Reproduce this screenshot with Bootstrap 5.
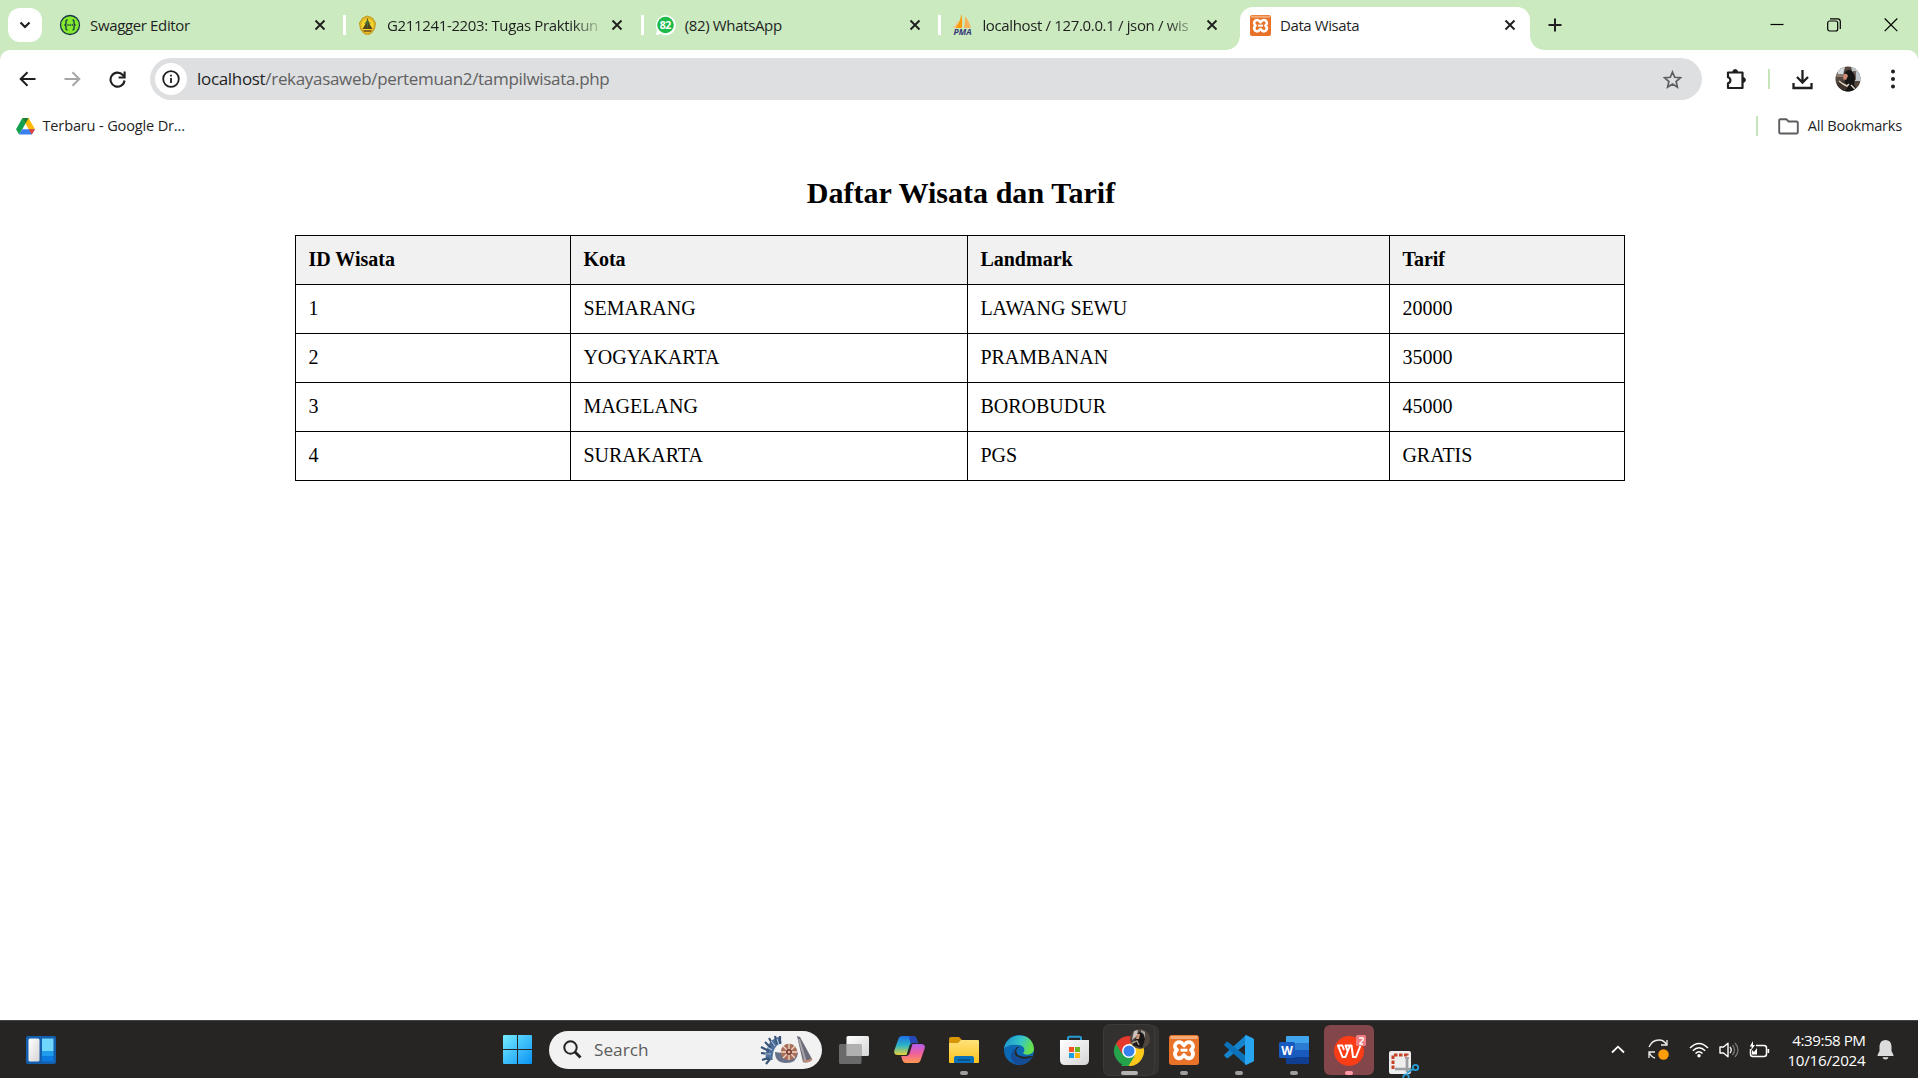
<!DOCTYPE html>
<html lang="id">
<head>
<meta charset="utf-8">
<title>Data Wisata</title>
<link rel="stylesheet" href="https://cdn.jsdelivr.net/npm/bootstrap@5.3.0/dist/css/bootstrap.min.css">
<style>
body{width:1918px;height:1078px;overflow:hidden;background:#fff;font-family:"Open Sans","Noto Sans",sans-serif;color:#1f1f1f}
svg{display:block;flex:none}
header{background:linear-gradient(#cbeabf 70px,#fff 70px)}
.strip{height:50px;background:#cbeabf}
.chev{width:34px;height:34px;margin-left:8px;background:#fff;border-radius:12px}
.tab-item{width:294.7px;height:36px;padding-left:11px;font-size:15px;letter-spacing:-.35px}
.first-tab{width:301px;padding-left:17px}
.last-tab{width:298.6px}
.fav{margin-right:9px}
.tab-item .label,.fit{white-space:nowrap;display:block}
.tab-item .label{width:210px}
.tab-item svg.x{margin-left:14px}
.fade-end{-webkit-mask-image:linear-gradient(90deg,#000 88%,rgba(0,0,0,.25) 100%)}
.split{width:3px;height:20px;background:#fff}
.active-tab{width:290px;height:43px;background:#fff;border-radius:13px 13px 0 0;position:relative;font-size:15px;letter-spacing:-.4px;padding:0 14px 7px 10px}
.active-tab:before,.active-tab:after{content:"";position:absolute;bottom:0;width:14px;height:14px}
.active-tab:before{left:-14px;background:radial-gradient(circle at 0 0,transparent 13.5px,#fff 14px)}
.active-tab:after{right:-14px;background:radial-gradient(circle at 100% 0,transparent 13.5px,#fff 14px)}
.plus{margin-left:18px}
.controls{gap:43px;padding-right:20px}
.tools{height:58px;background:#fff;border-radius:10px 10px 0 0}
.navs{gap:28px;padding-left:19px}
.omni{width:1552px;height:42px;border-radius:21px;background:#dedfe1;margin-left:24px}
.addr{font-size:17px;letter-spacing:-.32px;margin-left:10px}
.addr .path{color:#616161}
.info{width:32px;height:32px;border-radius:50%;background:#fff;margin-left:5px}
.gbar{width:2px;height:20px;background:#c6e5ba}
.marks{height:36px;font-size:14.6px}
.book{letter-spacing:-.18px;margin-left:8px}
.allb{letter-spacing:-.24px;margin-left:9px;margin-right:16px}
.sheet{height:876px;font-family:"Liberation Serif",serif;color:#000}
.sheet h2{font-size:30px;font-weight:700;line-height:34px;letter-spacing:.04px;padding:32px 0 25px 4px}
.wisata{width:1330px;margin-left:295px;border-collapse:collapse;table-layout:fixed;font-size:20px;line-height:23px}
.wisata th,.wisata td{border:1px solid #000;height:49px;padding:0 12.4px 1.6px}
.wisata th{background:#f1f1f1}
.dock{height:58px;background:#272523;border-top:1px solid #454342;color:#fff}
.find{width:273px;height:38px;border-radius:19px;background:#f2f2f2;color:#5c5c5c;font-size:17.2px;margin-left:17px}
.apps{margin-left:4.500px}
.cell{width:55px;height:57px;position:relative}
.cell.dot:after{content:"";position:absolute;left:23.5px;bottom:3px;width:8px;height:4px;border-radius:2px;background:#9f9e9d}
.cell.run:after{left:19px;width:17px;background:#b5b4b3}
.cell.pink:after{background:#ff9aa8}
.tile{width:50px;height:50px;border-radius:6px}
.chrome-tile{background:#333130;box-shadow:0 0 0 1px #3d3b3a,5px 0 0 0 #353332}
.wps-tile{background:#83464b}
.clock{font-size:15.2px;line-height:20px;width:78px;margin-left:18px}
.time{letter-spacing:-.5px}
.date{letter-spacing:-.25px}
</style>
<script src="https://cdn.jsdelivr.net/npm/bootstrap@5.3.0/dist/js/bootstrap.bundle.min.js"></script>
</head>
<body>
<svg width="0" height="0" class="position-absolute">
<defs>
<symbol id="close" viewBox="0 0 12 12"><path d="M1.500 1.500l9 9M10.500 1.500l-9 9" stroke="#1f1f1f" stroke-width="1.900"/></symbol>
<symbol id="xampp" viewBox="0 0 30 30"><rect width="30" height="30" rx="3" fill="#e87328"/><rect x="1" y="1" width="28" height="3" rx="1.500" fill="#f3ab78"/><path d="M15 10.500Q11.500 5.500 7.500 8 4 11.500 8 15 4 18.500 7.500 22.500 11.500 25 15 20 18.500 25 22.500 22.500 26 18.500 22 15 26 11.500 22.500 8 18.500 5.500 15 10.500z" fill="none" stroke="#fff" stroke-width="3.700" stroke-linejoin="round"/><path d="M11.500 15.200h7" stroke="#fff" stroke-width="3"/></symbol>
<linearGradient id="gw" x1="0" y1="0" x2="1" y2="1"><stop stop-color="#74ecff"/><stop offset="1" stop-color="#0a93f5"/></linearGradient>
<linearGradient id="gf" x1="0" y1="0" x2="0" y2="1"><stop stop-color="#ffe27a"/><stop offset="1" stop-color="#fcc21d"/></linearGradient>
<linearGradient id="ge" x1="0" y1="0" x2="1" y2=".3"><stop stop-color="#168bd1"/><stop offset=".6" stop-color="#37c6c6"/><stop offset="1" stop-color="#66e04f"/></linearGradient>
<linearGradient id="gc1" x1="0" y1="0" x2="0" y2="1"><stop stop-color="#1d6fe8"/><stop offset=".5" stop-color="#2eb5c4"/><stop offset="1" stop-color="#e8d438"/></linearGradient>
<linearGradient id="gc2" x1="0" y1="0" x2="0" y2="1"><stop stop-color="#b45cf0"/><stop offset=".5" stop-color="#f0609a"/><stop offset="1" stop-color="#ff9a50"/></linearGradient>
<linearGradient id="gt" x1="0" y1="0" x2="1" y2="1"><stop stop-color="#fff"/><stop offset="1" stop-color="#d5d5d5"/></linearGradient>
</defs>
</svg>

<header>
<div class="strip d-flex align-items-center">
  <div class="chev d-flex align-items-center justify-content-center"><svg width="12" height="8" viewBox="0 0 12 8"><path d="M1.500 1.500L6 6l4.500-4.500" fill="none" stroke="#1f1f1f" stroke-width="2.200"/></svg></div>
  <div class="tab-item first-tab d-flex align-items-center">
    <svg class="fav" width="22" height="22" viewBox="0 0 22 22"><circle cx="11" cy="11" r="9.500" fill="#85ea2d" stroke="#173647" stroke-width="1.300"/><path d="M8.500 6C6.500 6 7 7.500 7 9s-.4 2-1.600 2C6.600 11 7 11.600 7 13s-.5 3 1.500 3M13.500 6c2 0 1.500 1.500 1.500 3s.4 2 1.600 2c-1.200 0-1.600.6-1.600 2s.5 3-1.500 3" fill="none" stroke="#173647" stroke-width="1.300"/><path d="M8.300 11h5.800" stroke="#173647" stroke-width="1.500" stroke-dasharray="1.400 .8"/></svg>
    <span class="label">Swagger Editor</span><svg class="x" width="12" height="12"><use href="#close"/></svg>
  </div>
  <div class="split"></div>
  <div class="tab-item d-flex align-items-center">
    <svg class="fav" width="21" height="20" viewBox="-.5 1 21 20"><path d="M10 2l5 2 3 5-1 6-3 4-4 2-4-2-3-4-1-6 3-5z" fill="#dfb72b" stroke="#c29a1c"/><circle cx="10" cy="11" r="6" fill="#f5d72d"/><path d="M10 4l2 6 3 5H5l3-5z" fill="#54451c"/><path d="M7 9h6M10 6v8" stroke="#3e7040" stroke-width="1"/><path d="M6 17h8" stroke="#8f6b20" stroke-width="2"/></svg>
    <span class="label fade-end">G211241-2203: Tugas Praktikun</span><svg class="x" width="12" height="12"><use href="#close"/></svg>
  </div>
  <div class="split"></div>
  <div class="tab-item d-flex align-items-center">
    <svg class="fav" width="21" height="22" viewBox="0 0 21 22"><path d="M1 21l1-5A10 10 0 1 1 6 20z" fill="#fff"/><circle cx="10.500" cy="11" r="8.300" fill="#1dbb49"/><text x="10.300" y="14.800" text-anchor="middle" font-size="10.500" font-weight="700" fill="#fff">82</text></svg>
    <span class="label">(82) WhatsApp</span><svg class="x" width="12" height="12"><use href="#close"/></svg>
  </div>
  <div class="split"></div>
  <div class="tab-item last-tab d-flex align-items-center">
    <svg class="fav" width="21" height="22" viewBox="0 0 21 22"><path d="M9 0c2 5 1 9 1 14H3C6 10 9 6 9 0z" fill="#f89c0e"/><path d="M13 2c3 4 5 8 6 12h-7c1-4 1-8 1-12z" fill="#f5b25a"/><path d="M5 6c1 3 0 6-1 8H1c2-2 4-5 4-8z" fill="#fac484"/><text x="10.500" y="21" text-anchor="middle" font-size="8.500" letter-spacing="0" font-style="italic" font-weight="700" fill="#353b78">PMA</text></svg>
    <span class="label fade-end">localhost / 127.0.0.1 / json / wis</span><svg class="x" width="12" height="12"><use href="#close"/></svg>
  </div>
  <div class="active-tab d-flex align-items-center align-self-end">
    <svg class="fav" width="21" height="21"><use href="#xampp"/></svg><span class="fit">Data Wisata</span>
    <svg class="ms-auto" width="12" height="12"><use href="#close"/></svg>
  </div>
  <svg class="plus" width="14" height="14" viewBox="0 0 14 14"><path d="M7 .5v13M.5 7h13" stroke="#1f1f1f" stroke-width="2"/></svg>
  <div class="controls d-flex align-items-center ms-auto">
    <svg width="14" height="14" viewBox="0 0 14 14"><path d="M.5 6.500h13" stroke="#000" stroke-width="1.200"/></svg>
    <svg width="14" height="14" viewBox="0 0 14 14"><rect x=".7" y="3" width="10" height="10" rx="2" fill="none" stroke="#000" stroke-width="1.200"/><path d="M3 .8h7.500q2.800 0 2.800 2.800V11" fill="none" stroke="#000" stroke-width="1.200"/></svg>
    <svg width="14" height="14" viewBox="0 0 14 14"><path d="M.7.500l12.600 12.600M13.300.5L.7 13.100" stroke="#000" stroke-width="1.200"/></svg>
  </div>
</div>

<div class="tools d-flex align-items-center">
  <div class="navs d-flex align-items-center">
  <svg width="17" height="16" viewBox="0 0 17 16"><path d="M16.500 8H2M8.500 1.200L1.700 8l6.800 6.800" fill="none" stroke="#1f1f1f" stroke-width="2"/></svg>
  <svg width="17" height="16" viewBox="0 0 17 16"><path d="M.5 8H15M8.500 1.200L15.300 8l-6.800 6.800" fill="none" stroke="#a6a6a6" stroke-width="2"/></svg>
  <svg width="17" height="17" viewBox="0 0 17 17"><path d="M15.500 9.500A7 7 0 1 1 13.800 4L15 5.300" fill="none" stroke="#1f1f1f" stroke-width="2.100"/><path d="M15.600.5v6h-6" fill="none" stroke="#1f1f1f" stroke-width="2.100"/></svg>
  </div>
  <div class="omni d-flex align-items-center">
    <div class="info d-flex align-items-center justify-content-center"><svg width="18" height="18" viewBox="0 0 18 18"><circle cx="9" cy="9" r="7.800" fill="none" stroke="#1f1f1f" stroke-width="1.800"/><path d="M9 8v5M9 4.800v1.800" stroke="#1f1f1f" stroke-width="1.800"/></svg></div>
    <span class="fit addr">localhost<span class="path">/rekayasaweb/pertemuan2/tampilwisata.php</span></span>
    <svg class="ms-auto" style="margin-right:20px" width="19" height="19" viewBox="0 0 19 19"><path d="M9.500 2l2.200 5.300 5.700.5-4.300 3.700 1.300 5.600-4.900-3-4.900 3 1.300-5.600L1.600 7.800l5.700-.5z" fill="none" stroke="#5f6062" stroke-width="1.700"/></svg>
  </div>
  <svg style="margin-left:23px" width="22" height="22" viewBox="0 0 22 22"><path d="M3 4.500h14.500V20H3v-4.600a3.200 3.200 0 0 0 0-6.200z" fill="none" stroke="#1f1f1f" stroke-width="2.200" stroke-linejoin="round"/><path d="M7.800 4a2.400 2.400 0 0 1 4.800 0zM18 9.600a2.400 2.400 0 0 1 0 4.800z" fill="#1f1f1f" stroke="#1f1f1f"/></svg>
  <div class="gbar" style="margin-left:21px"></div>
  <svg style="margin-left:22px" width="21" height="21" viewBox="0 0 21 21"><path d="M10.500 1v12M5 8l5.500 5.500L16 8M1.500 14v5h18v-5" fill="none" stroke="#1f1f1f" stroke-width="2.300"/></svg>
  <svg style="margin-left:22px" width="26" height="26" viewBox="0 0 26 26"><defs><clipPath id="av"><circle cx="13" cy="13" r="12.500"/></clipPath></defs><g clip-path="url(#av)"><rect width="26" height="26" fill="#56483f"/><path d="M0 0h9v11H0z" fill="#8b7b70"/><path d="M3 1h7l-2 7H3z" fill="#d3dde0"/><path d="M16 0h10v15h-7z" fill="#bfc9cd"/><path d="M18 5h3v9h-3z" fill="#71625b"/><path d="M9 8q3-6 8-3 5 5 2 13l4 8H5l5-11z" fill="#161516"/><path d="M9 8q3-1 4 2l-2 4-3-1z" fill="#d18a73"/><path d="M2 17l6-3 5 7-4 5H4z" fill="#3e342d"/><path d="M8 18l4 2 2-2M4 15l4 3M16 19l4 4" fill="none" stroke="#ded1be" stroke-width="1.500"/></g></svg>
  <svg style="margin-left:29px" width="6" height="20" viewBox="0 0 6 20"><g fill="#1f1f1f"><circle cx="3" cy="2.500" r="2"/><circle cx="3" cy="10" r="2"/><circle cx="3" cy="17.500" r="2"/></g></svg>
</div>

<div class="marks d-flex align-items-center">
  <svg style="margin-left:15.500px" width="19" height="17" viewBox="0 0 20 18"><path d="M6.700 0h6.600L6.600 11.800 3.300 17.500 0 11.800z" fill="#11a050"/><path d="M6.700 0h6.600L20 11.800h-6.600z" fill="#fdba00"/><path d="M6.600 11.800H20l-3.300 5.700H3.300z" fill="#3b80f3"/><path d="M13.400 11.800H20l-3.300 5.700z" fill="#e64234"/><path d="M6.700 0h6.600L10 5.900z" fill="#188038"/></svg>
  <span class="fit book">Terbaru - Google Dr...</span>
  <div class="gbar ms-auto"></div>
  <svg style="margin-left:20px" width="21" height="17" viewBox="0 0 21 17"><path d="M2.500 1.200h5.800l2.200 2.300h8q1.300 0 1.300 1.300v9.400q0 1.300-1.300 1.300h-16q-1.300 0-1.300-1.300V2.500q0-1.300 1.300-1.300z" fill="none" stroke="#5b5d60" stroke-width="1.900"/></svg>
  <span class="fit allb">All Bookmarks</span>
</div>
</header>

<main class="sheet">
  <h2 class="text-center m-0">Daftar Wisata dan Tarif</h2>
  <table class="wisata">
    <colgroup><col style="width:275px"><col style="width:397px"><col style="width:422px"><col style="width:235px"></colgroup>
    <tr><th>ID Wisata</th><th>Kota</th><th>Landmark</th><th>Tarif</th></tr>
    <tr><td>1</td><td>SEMARANG</td><td>LAWANG SEWU</td><td>20000</td></tr>
    <tr><td>2</td><td>YOGYAKARTA</td><td>PRAMBANAN</td><td>35000</td></tr>
    <tr><td>3</td><td>MAGELANG</td><td>BOROBUDUR</td><td>45000</td></tr>
    <tr><td>4</td><td>SURAKARTA</td><td>PGS</td><td>GRATIS</td></tr>
  </table>
</main>

<footer class="dock d-flex align-items-center">
  <svg style="margin-left:26px" width="30" height="28" viewBox="0 0 30 28"><rect width="30" height="28" rx="2" fill="#135fae"/><rect x="2.500" y="2.500" width="11" height="23" rx="1.500" fill="url(#gt)"/><path d="M16 2.500h11.500V15H16z" fill="#70d5fb"/><path d="M16 15h11.500v5H16z" fill="#209cee"/><path d="M16 20h11.500v5.500H16z" fill="#0b7be0"/></svg>
  <svg style="margin-left:447px" width="29" height="29" viewBox="0 0 29 29"><path fill="url(#gw)" d="M1 0h13v14H0V1q0-1 1-1zM15 0h13q1 0 1 1v13H15zM0 15h14v14H1q-1 0-1-1zM15 15h14v13q0 1-1 1H15z"/></svg>
  <div class="find d-flex align-items-center">
    <svg style="margin-left:14px" width="19" height="19" viewBox="0 0 19 19"><circle cx="7.500" cy="7.500" r="6.200" fill="none" stroke="#222" stroke-width="2"/><path d="M12 12l5.500 5.500" stroke="#222" stroke-width="2.800"/></svg>
    <span class="fit" style="margin-left:12px;padding-top:1px">Search</span>
    <svg class="ms-auto" style="margin-right:8px" width="54" height="30" viewBox="0 0 54 30"><path d="M21 5Q9 7 9 25" fill="none" stroke="#50719c" stroke-width="7"/><path d="M20 1v8M15 1l2 8M9 3l4 7M5 7l6 6M1 12l8 4M1 18l8 1M2 25l7-2M6 29l4-5" stroke="#395678" stroke-width="2.200"/><path d="M17 4l2 6M11 6l4 5M7 12l5 3M5 19l6 0" stroke="#a9c2dd" stroke-width="1.100"/><path d="M15 17q0 11 11 11t12-10l-9-6-7 6z" fill="#687187"/><circle cx="29" cy="17" r="8.300" fill="#a96f5a"/><path d="M29 9v16M21 17h16M23 11l12 12M35 11L23 23" stroke="#f0d7c5" stroke-width="1.300"/><circle cx="29" cy="17" r="3" fill="#793f37"/><circle cx="29" cy="17" r="1.300" fill="#e2ba9f"/><path d="M37 1l3 1 12 22q-3 5-9 3z" fill="#6b6b79"/><path d="M39 4l6.500 22" stroke="#aaa4a9" stroke-width="2"/><path d="M43 25q5 3 9-1" fill="none" stroke="#c88f77" stroke-width="2"/></svg>
  </div>
  <div class="apps d-flex align-items-center">
    <div class="cell d-flex align-items-center justify-content-center"><svg width="30" height="28" viewBox="0 0 30 28"><rect x="7.500" width="22.500" height="20" rx="1.500" fill="url(#gt)"/><rect y="8" width="22.500" height="20" rx="1.500" fill="#777" fill-opacity=".85"/><path d="M7.500 8h15v12h-15z" fill="#b0b0b0"/></svg></div>
    <div class="cell d-flex align-items-center justify-content-center"><svg width="31" height="29" viewBox="0 0 31 29"><path d="M8 1h11q3 0 4 4l.8 3H19q-3 0-4 4l-2.500 8H4q-5 0-3.500-5L4 5q1-4 4-4z" fill="url(#gc1)"/><path d="M23 28H12q-3 0-4-4l-.8-3H12q3 0 4-4l2.500-8H27q5 0 3.500 5L27 24q-1 4-4 4z" fill="url(#gc2)"/><path d="M15 1h4q3 0 4 4l.8 3H19q-1.500 0-2.500 1z" fill="#2547b8"/></svg></div>
    <div class="cell dot d-flex align-items-center justify-content-center"><svg width="30" height="28" viewBox="0 0 30 28"><path d="M0 3q0-2 2-2h8l3 3-3 3H0z" fill="#d69607"/><path d="M0 7h9l3-3h17q1 0 1 1v21q0 1-1 1H1q-1 0-1-1z" fill="url(#gf)"/><path d="M5 27v-5q0-2 2-2h16q2 0 2 2v5z" fill="#0c70b8"/><path d="M9 24h12" stroke="#064779" stroke-width="1.300"/></svg></div>
    <div class="cell d-flex align-items-center justify-content-center"><svg width="30" height="30" viewBox="0 0 30 30"><circle cx="15" cy="15" r="15" fill="#0d68b4"/><path d="M0 14C2-3 29-5 30 14c0 6-9 7-11 4 3-3 1-8-5-8C7 9 2 11 0 14z" fill="url(#ge)"/><path d="M12 13c-5 7 2 13 16 9-3 5-7 8-13 8C5 28 5 16 12 13z" fill="#164c96"/><path d="M15 12q-5 3-1 8 4 3 13 1 2-1 1 1-8 4-16-1-3-4 1-9z" fill="#272523"/></svg></div>
    <div class="cell d-flex align-items-center justify-content-center"><svg width="29" height="30" viewBox="0 0 29 30"><path d="M8 6V3q0-1.300 1.300-1.300h10.400Q21 1.700 21 3v3" fill="none" stroke="#279bd1" stroke-width="2"/><path d="M0 5h29v20q0 5-5 5H5q-5 0-5-5z" fill="url(#gt)"/><path d="M9 12h5v5H9z" fill="#f35325"/><path d="M15 12h5v5h-5z" fill="#70b51d"/><path d="M9 18h5v5H9z" fill="#1b9de2"/><path d="M15 18h5v5h-5z" fill="#fdb813"/></svg></div>
    <div class="cell dot run d-flex align-items-center justify-content-center"><div class="tile chrome-tile d-flex align-items-center justify-content-center"><svg width="44" height="44" viewBox="0 0 44 44"><g transform="translate(7 8)"><path d="M15 15L2 7.500A15 15 0 0 1 28 7.500z" fill="#e5392d"/><path d="M15 15V30A15 15 0 0 1 2 7.500z" fill="#24a24c"/><path d="M15 15l13-7.500A15 15 0 0 1 14 30z" fill="#fcc91a"/><path d="M8.500 18.500L2 7.500h13z" fill="#e5392d"/><path d="M21.500 18.500L14.500 30H7l6-10z" fill="#24a24c"/><path d="M15 7.500h13q3 7 0 14l-7-3z" fill="#fcc91a"/><circle cx="15" cy="15" r="7" fill="#fff"/><circle cx="15" cy="15" r="5.500" fill="#3481ef"/></g><circle cx="33" cy="11" r="10" fill="#514741"/><path d="M27 3l4-1-1 6-5 4z" fill="#c9c3bc"/><path d="M34 2l4 2v9l-3 1z" fill="#aaa9a7"/><path d="M31 5q6-3 7 7l-3 8-9-3z" fill="#191718"/><path d="M30 6h3l-1 5h-3z" fill="#cc9778"/><path d="M25 15l5-2 2 4" fill="none" stroke="#a39887" stroke-width="1.500"/></svg></div></div>
    <div class="cell dot d-flex align-items-center justify-content-center"><svg width="30" height="30"><use href="#xampp"/></svg></div>
    <div class="cell dot d-flex align-items-center justify-content-center"><svg width="30" height="30" viewBox="0 0 30 30"><path d="M22 0v9L4 23l-1 .5L.5 21q-.8-1 .2-1.800z" fill="#1684cc"/><path d="M22 30v-9L4 7l-1-.5L.5 9q-.8 1 .2 1.800z" fill="#0b71b9"/><path d="M22 0l7 3.200q1 .6 1 1.500v20.600q0 1-1 1.500L22 30q-1 0-1-2V2q0-2 1-2z" fill="#27a5f0"/></svg></div>
    <div class="cell dot d-flex align-items-center justify-content-center"><svg width="30" height="28" viewBox="0 0 30 28"><path d="M7 1q0-1 1-1h21q1 0 1 1v6H7z" fill="#41a5ee"/><path d="M7 7h23v7H7z" fill="#2b7cd3"/><path d="M7 14h23v7H7z" fill="#185abd"/><path d="M7 21h23v6q0 1-1 1H8q-1 0-1-1z" fill="#103f91"/><rect y="6" width="16" height="16" rx="1.500" fill="#185abd"/><text x="8" y="18.500" text-anchor="middle" font-size="12" font-weight="700" fill="#fff">W</text></svg></div>
    <div class="cell dot pink d-flex align-items-center justify-content-center"><div class="tile wps-tile d-flex align-items-center justify-content-center"><svg width="34" height="34" viewBox="0 0 34 34"><circle cx="17" cy="18" r="15" fill="#fa3d16"/><path d="M12 17l-1.700-4.500H6L10.500 24h3L18 12.500h1.500L21 24h3l4.500-11.500M15.500 18L13.500 12.500H18" fill="none" stroke="#fff" stroke-width="2" stroke-linejoin="round"/><rect x="24" y="2" width="10" height="11" rx="1.500" fill="#ef7d84"/><path d="M27 5h4q1 2-1 3l-2 2v1h3" fill="none" stroke="#fff" stroke-width="1.300"/></svg></div></div>
    <div class="cell d-flex align-items-end" style="padding-left:12px"><svg width="32" height="27" viewBox="0 0 32 27"><rect width="22" height="23" rx="2" fill="#eee"/><path d="M4 18V4h14v4" fill="none" stroke="#c74327" stroke-width="3" stroke-dasharray="3.500 1.500"/><path d="M18 6v15M6 18h16" stroke="#9ca0a3" stroke-width="2.700"/><circle cx="26.500" cy="16.500" r="2.700" fill="none" stroke="#299ed6" stroke-width="1.800"/><circle cx="17" cy="26" r="2.700" fill="none" stroke="#299ed6" stroke-width="1.800"/><path d="M18 22l6-4" stroke="#299ed6" stroke-width="2"/></svg></div>
  </div>
  <div class="tray d-flex align-items-center ms-auto">
    <svg width="14" height="9" viewBox="0 0 14 9"><path d="M1 7.500L7 1.700l6 5.800" fill="none" stroke="#fff" stroke-width="1.800"/></svg>
    <svg style="margin-left:23px" width="21" height="21" viewBox="0 0 21 21"><path d="M1 8Q4 1 11 1q5 0 8 5M19 1v5h-6M1 13q2 5 6 6M1 19v-6h6" fill="none" stroke="#eee" stroke-width="1.300"/><circle cx="15.500" cy="15.500" r="5.200" fill="#ff9c0a"/></svg>
    <svg style="margin-left:20px" width="20" height="16" viewBox="0 0 20 16"><path d="M1 6q9-9 18 0M3.800 8.800q6.200-6 12.400 0M6.500 11.500q3.500-3.500 7 0" fill="none" stroke="#fff" stroke-width="1.500"/><circle cx="10" cy="13.800" r="1.700" fill="#fff"/></svg>
    <svg style="margin-left:10px" width="20" height="16" viewBox="0 0 20 16"><path d="M1 5h3.500L9 1.200v13.600L4.500 11H1z" fill="none" stroke="#fff" stroke-width="1.400" stroke-linejoin="round"/><path d="M11 5q2.500 3 0 6" fill="none" stroke="#fff" stroke-width="1.300"/><path d="M13.500 3q4 5 0 10M16 1q6 7 0 14" fill="none" stroke="#777" stroke-width="1.300"/></svg>
    <svg style="margin-left:10px" width="21" height="17" viewBox="0 0 21 17"><path d="M7 4.500h8q2.500 0 2.500 2.500v6q0 2.500-2.500 2.500H4q-2.500 0-2.500-2.500V8" fill="none" stroke="#fff" stroke-width="1.500"/><path d="M18.500 8h1.700v4h-1.700zM3 9l2 2 3-4v6.500H3z" fill="#fff"/><path d="M4 0L.8 5.500h2L2 9.500l4-5.500H4z" fill="#fff"/></svg>
    <div class="clock d-flex flex-column align-items-end"><span class="fit time">4:39:58 PM</span><span class="fit date">10/16/2024</span></div>
    <svg style="margin-left:11px;margin-right:24.500px" width="17" height="20" viewBox="0 0 17 20"><path d="M8.500 0q5.500 0 6 6v5l2 4q.3 1-.7 1H1.200q-1 0-.7-1l2-4V6q.5-6 6-6zM5.500 17.200h6q-.5 2.300-3 2.300t-3-2.300z" fill="#dcdcdc"/></svg>
  </div>
</footer>
</body>
</html>
